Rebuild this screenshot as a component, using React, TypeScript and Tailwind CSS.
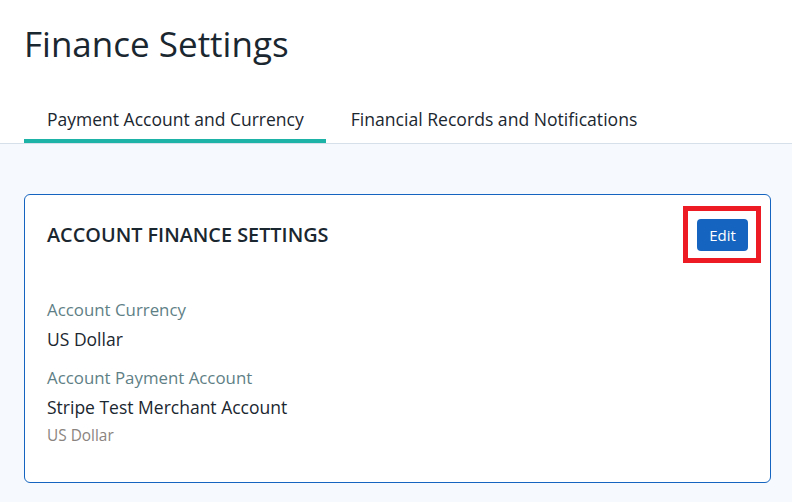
import React from "react";

export default function App() {
  return (
    <div className="w-[792px] h-[502px] bg-white flex flex-col overflow-hidden" style={{ fontFamily: '"Open Sans", "Noto Sans", sans-serif' }}>
      <div className="px-[24px] pt-[20px]">
        <h1 className="text-[35px] leading-[48px] text-[#1b2730] font-normal">Finance Settings</h1>
        <div className="flex mt-[34px]">
          <div className="pl-[23px] pr-[22px] h-[41px] pb-[3px] flex items-center border-b-[4px] border-[#1db3a6] text-[17.5px] text-[#1b2730]">Payment Account and Currency</div>
          <div className="px-[25px] h-[41px] pb-[3px] flex items-center border-b-[4px] border-transparent text-[17.6px] text-[#1b2730]">Financial Records and Notifications</div>
        </div>
      </div>
      <div className="flex-1 bg-[#f6f9fd] border-t border-[#d6e0ea] pt-[50px] pl-[24px] pr-[21px]">
        <div className="bg-white border border-[#1565c0] rounded-[6px] h-[289px] px-[22px] pt-[24px]">
          <div className="flex items-center justify-between">
            <h2 className="text-[19.85px] font-semibold text-[#1b2730]">ACCOUNT FINANCE SETTINGS</h2>
            <div className="relative">
              <span className="absolute left-[-14px] top-[-13px] right-[-13px] bottom-[-12px] border-[5px] border-[#ed1c24]"></span>
              <button className="relative w-[51px] h-[32px] rounded-[4px] bg-[#1565c0] text-white text-[15px]">Edit</button>
            </div>
          </div>
          <div className="mt-[47px] flex flex-col">
            <div className="text-[16.85px] leading-[24px] text-[#5f7f86]">Account Currency</div>
            <div className="text-[17.5px] leading-[26px] mt-[4px] text-[#1b2730]">US Dollar</div>
            <div className="text-[16.85px] leading-[24px] mt-[14px] text-[#5f7f86]">Account Payment Account</div>
            <div className="text-[17.5px] leading-[26px] mt-[4px] text-[#1b2730]">Stripe Test Merchant Account</div>
            <div className="text-[15.4px] leading-[22px] mt-[5px] text-[#8a8480]">US Dollar</div>
          </div>
        </div>
      </div>
    </div>
  );
}
